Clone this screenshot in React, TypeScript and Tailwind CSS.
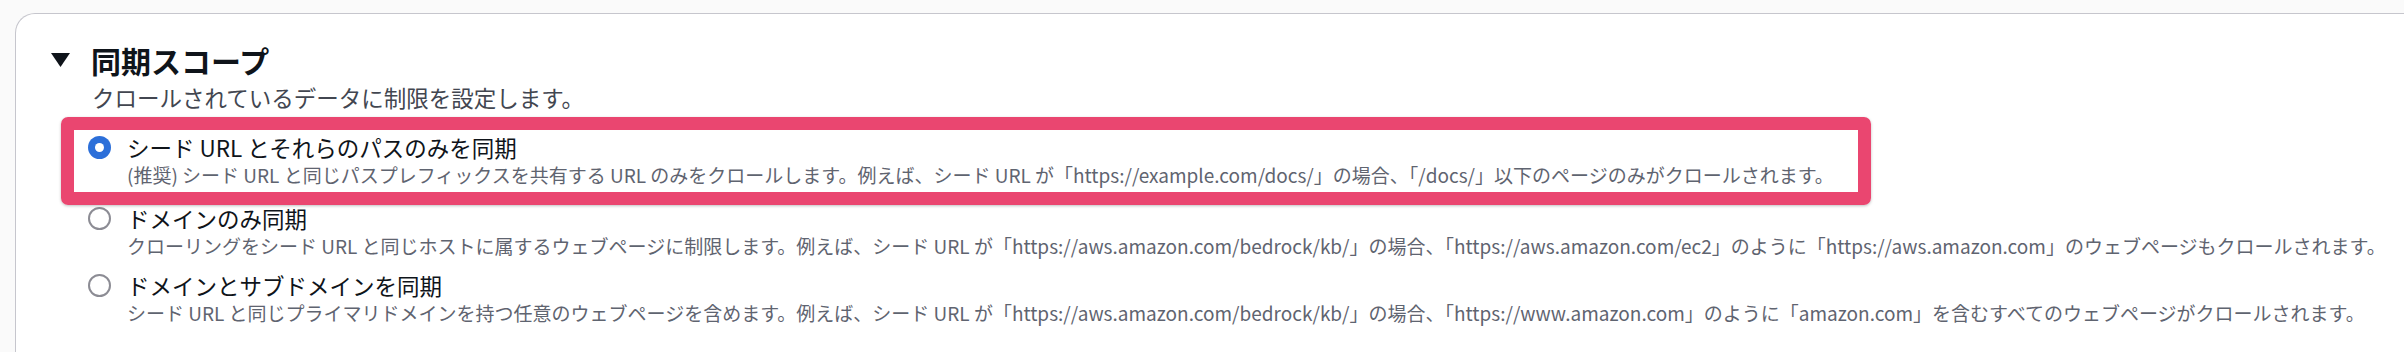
import React from "react";

type ScopeOption = {
  label: string;
  description: string;
  checked?: boolean;
  spacing: string;
};

const options: ScopeOption[] = [
  {
    label: "シード URL とそれらのパスのみを同期",
    description:
      "(推奨) シード URL と同じパスプレフィックスを共有する URL のみをクロールします。例えば、シード URL が「https://example.com/docs/」の場合、「/docs/」以下のページのみがクロールされます。",
    checked: true,
    spacing: "mt-[21px]",
  },
  {
    label: "ドメインのみ同期",
    description:
      "クローリングをシード URL と同じホストに属するウェブページに制限します。例えば、シード URL が「https://aws.amazon.com/bedrock/kb/」の場合、「https://aws.amazon.com/ec2」のように「https://aws.amazon.com」のウェブページもクロールされます。",
    spacing: "mt-[15px]",
  },
  {
    label: "ドメインとサブドメインを同期",
    description:
      "シード URL と同じプライマリドメインを持つ任意のウェブページを含めます。例えば、シード URL が「https://aws.amazon.com/bedrock/kb/」の場合、「https://www.amazon.com」のように「amazon.com」を含むすべてのウェブページがクロールされます。",
    spacing: "mt-[11px]",
  },
];

const Radio = ({ checked }: { checked?: boolean }) => {
  if (checked) {
    return (
      <span className="w-[23px] h-[23px] rounded-full bg-[#2c6fd9] flex items-center justify-center">
        <span className="w-[9px] h-[9px] rounded-full bg-white" />
      </span>
    );
  }
  return (
    <span className="w-[23px] h-[23px] rounded-full border-2 border-[#8c8c94] bg-white" />
  );
};

const App = () => {
  return (
    <div
      className="h-[352px] w-full overflow-hidden bg-[#fafafa] pt-[13px] pl-[15px]"
      style={{ fontFamily: '"Noto Sans CJK JP", "Noto Sans", sans-serif' }}
    >
      <div className="relative h-full bg-white border-l border-t border-[#c6c6cd] rounded-tl-[20px] pl-[35px] pt-[28px]">
        {/* heading */}
        <div className="flex items-center gap-[21px]">
          <svg width="19" height="14" viewBox="0 0 19 14">
            <polygon points="0,0 19,0 9.5,14" fill="#0f141a" />
          </svg>
          <h2 className="text-[30px] leading-[36px] font-bold text-[#0f141a]">同期スコープ</h2>
        </div>
        <p className="mt-[4px] ml-[41px] text-[22.5px] leading-[30px] text-[#424650]">
          クロールされているデータに制限を設定します。
        </p>

        {/* radio group */}
        <div className="ml-[37px]">
          {options.map((opt) => (
            <div key={opt.label} className={`flex gap-[16px] ${opt.spacing}`}>
              <div className="h-[28px] flex items-center">
                <Radio checked={opt.checked} />
              </div>
              <div className="flex flex-col">
                <span className="text-[22.5px] leading-[28px] text-[#0f141a] whitespace-nowrap">{opt.label}</span>
                <span className="text-[19px] leading-[28px] text-[#5f6470] whitespace-nowrap">{opt.description}</span>
              </div>
            </div>
          ))}
        </div>

        {/* highlight annotation */}
        <div className="absolute left-[45px] top-[103px] w-[1810px] h-[88px] border-[13px] border-[#ea4670] rounded-[7px] shadow-[0_1px_3px_rgba(0,0,0,0.25)]" />
      </div>
    </div>
  );
};

export default App;
